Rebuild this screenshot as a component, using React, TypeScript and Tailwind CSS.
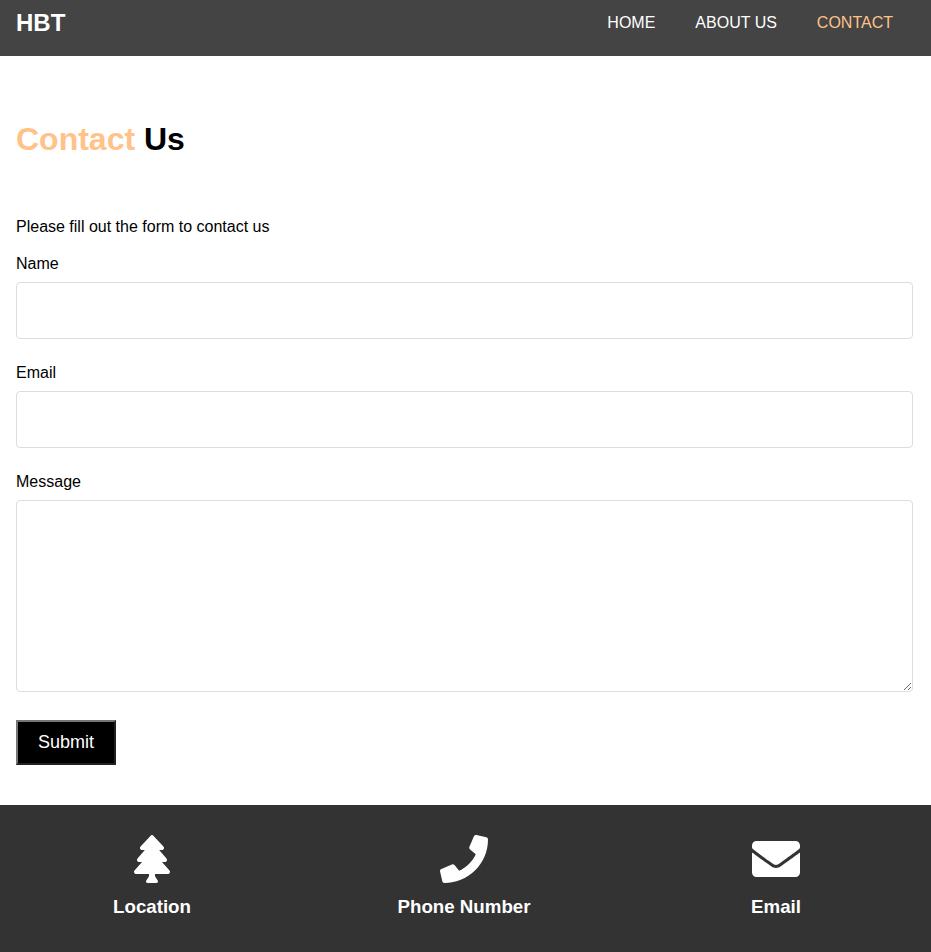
import { FaEnvelope, FaPhone, FaTree } from "react-icons/fa";

const fieldClass =
  "block w-full rounded border border-[#dddddd] bg-white outline-none";

const contacts = [
  { label: "Location", Icon: FaTree },
  { label: "Phone Number", Icon: FaPhone },
  { label: "Email", Icon: FaEnvelope },
];

export default function App() {
  return (
    <div className="flex h-[952px] w-full flex-col overflow-hidden bg-white font-['Liberation_Sans',Arial,sans-serif] text-base leading-[18px] text-black">
      <header className="flex h-14 shrink-0 items-start justify-between bg-[#444444] pl-4 pr-[38px] text-white">
        <h1 className="pt-[9px] text-2xl font-bold leading-[27px]">HBT</h1>
        <nav className="flex gap-10 pt-[14px]">
          <a href="#home">HOME</a>
          <a href="#about">ABOUT US</a>
          <a href="#contact" className="text-[#ffc288]">CONTACT</a>
        </nav>
      </header>
      <main className="h-[749px] shrink-0 pl-4 pr-[18px] pt-[65px]">
        <h2 className="text-[32px] font-bold leading-9">
          <span className="text-[#ffc288]">Contact</span> Us
        </h2>
        <p className="mt-[61px]">Please fill out the form to contact us</p>
        <form className="mt-[19px]">
          <label htmlFor="name" className="mb-[9px] block">Name</label>
          <input id="name" className={`${fieldClass} h-[57px]`} />
          <label htmlFor="email" className="mb-[9px] mt-[25px] block">Email</label>
          <input id="email" className={`${fieldClass} h-[57px]`} />
          <label htmlFor="message" className="mb-[9px] mt-[25px] block">Message</label>
          <textarea id="message" className={`${fieldClass} h-48 resize`} />
          <button
            type="button"
            className="mt-7 block h-[45px] w-[100px] border-2 border-b-[#212121] border-l-[#767676] border-r-[#212121] border-t-[#767676] bg-black pb-0.5 text-lg leading-5 text-white"
          >
            Submit
          </button>
        </form>
      </main>
      <footer className="grid flex-1 grid-cols-[repeat(3,160px)] justify-center gap-x-[152px] bg-[#333333] pr-[3px] pt-[30px] text-white">
        {contacts.map(({ label, Icon }) => (
          <div key={label} className="flex flex-col items-center">
            <Icon size={48} />
            <h3 className="mt-[13px] text-[18.72px] font-bold leading-[21px]">{label}</h3>
          </div>
        ))}
      </footer>
    </div>
  );
}
